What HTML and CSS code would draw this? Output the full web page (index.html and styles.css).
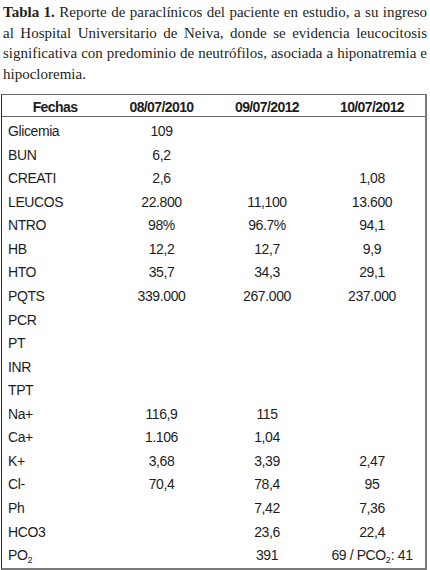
FILE: index.html
```html
<!DOCTYPE html>
<html lang="es">
<head>
<meta charset="utf-8">
<link rel="stylesheet" href="styles.css">
</head>
<body>
<p class="caption">
  <span class="line"><b>Tabla 1.</b> Reporte de paraclínicos del paciente en estudio, a su ingreso</span>
  <span class="line">al Hospital Universitario de Neiva, donde se evidencia leucocitosis</span>
  <span class="line">significativa con predominio de neutrófilos, asociada a hiponatremia e</span>
  <span class="line last">hipocloremia.</span>
</p>
<div class="tbl">
  <div class="row head"><span>Fechas</span><span>08/07/2010</span><span>09/07/2012</span><span>10/07/2012</span></div>
  <div class="body">
    <div class="row"><span class="lbl">Glicemia</span><span>109</span><span></span><span></span></div>
    <div class="row"><span class="lbl">BUN</span><span>6,2</span><span></span><span></span></div>
    <div class="row"><span class="lbl">CREATI</span><span>2,6</span><span></span><span>1,08</span></div>
    <div class="row"><span class="lbl">LEUCOS</span><span>22.800</span><span>11,100</span><span>13.600</span></div>
    <div class="row"><span class="lbl">NTRO</span><span>98%</span><span>96.7%</span><span>94,1</span></div>
    <div class="row"><span class="lbl">HB</span><span>12,2</span><span>12,7</span><span>9,9</span></div>
    <div class="row"><span class="lbl">HTO</span><span>35,7</span><span>34,3</span><span>29,1</span></div>
    <div class="row"><span class="lbl">PQTS</span><span>339.000</span><span>267.000</span><span>237.000</span></div>
    <div class="row"><span class="lbl">PCR</span><span></span><span></span><span></span></div>
    <div class="row"><span class="lbl">PT</span><span></span><span></span><span></span></div>
    <div class="row"><span class="lbl">INR</span><span></span><span></span><span></span></div>
    <div class="row"><span class="lbl">TPT</span><span></span><span></span><span></span></div>
    <div class="row"><span class="lbl">Na+</span><span>116,9</span><span>115</span><span></span></div>
    <div class="row"><span class="lbl">Ca+</span><span>1.106</span><span>1,04</span><span></span></div>
    <div class="row"><span class="lbl">K+</span><span>3,68</span><span>3,39</span><span>2,47</span></div>
    <div class="row"><span class="lbl">Cl-</span><span>70,4</span><span>78,4</span><span>95</span></div>
    <div class="row"><span class="lbl">Ph</span><span></span><span>7,42</span><span>7,36</span></div>
    <div class="row"><span class="lbl">HCO3</span><span></span><span>23,6</span><span>22,4</span></div>
    <div class="row"><span class="lbl">PO<sub>2</sub></span><span></span><span>391</span><span>69 / PCO<sub>2</sub>: 41</span></div>
  </div>
</div>
</body>
</html>
```
FILE: styles.css
```css
html, body {
  margin: 0;
  padding: 0;
  background: #ffffff;
}
body {
  width: 430px;
  height: 570px;
  overflow: hidden;
}
.caption {
  margin: 0;
  padding: 2px 3px 0 3px;
  font-family: "Liberation Serif", "Times New Roman", serif;
  font-size: 15px;
  line-height: 20.5px;
  color: #231f20;
}
.caption .line {
  display: block;
  text-align: justify;
  text-align-last: justify;
}
.caption .line.last {
  text-align-last: left;
}
.tbl {
  margin: 10px 3px 0 1px;
  border-left: 1px solid #2a2a2a;
  border-top: 1px solid #6a6a6a;
  border-right: 2px solid #7a7a7a;
  border-bottom: 2px solid #7a7a7a;
  font-family: "Liberation Sans", Arial, sans-serif;
  font-size: 14px;
  letter-spacing: -0.4px;
  color: #1d1d1d;
}
.row {
  display: grid;
  grid-template-columns: 106px 107px 104px 106px;
  height: 23.57px;
  line-height: 23.57px;
  white-space: nowrap;
}
.row span {
  text-align: center;
}
.row span.lbl {
  text-align: left;
  padding-left: 6px;
}
.head {
  height: 22px;
  padding-top: 3px;
  box-sizing: border-box;
  line-height: 19px;
  font-weight: bold;
  letter-spacing: -0.6px;
  border-bottom: 1px solid #6a6a6a;
}
.body {
  padding-top: 3px;
}
sub {
  font-size: 9px;
  line-height: 0;
  vertical-align: -3px;
  letter-spacing: 0;
}
```
